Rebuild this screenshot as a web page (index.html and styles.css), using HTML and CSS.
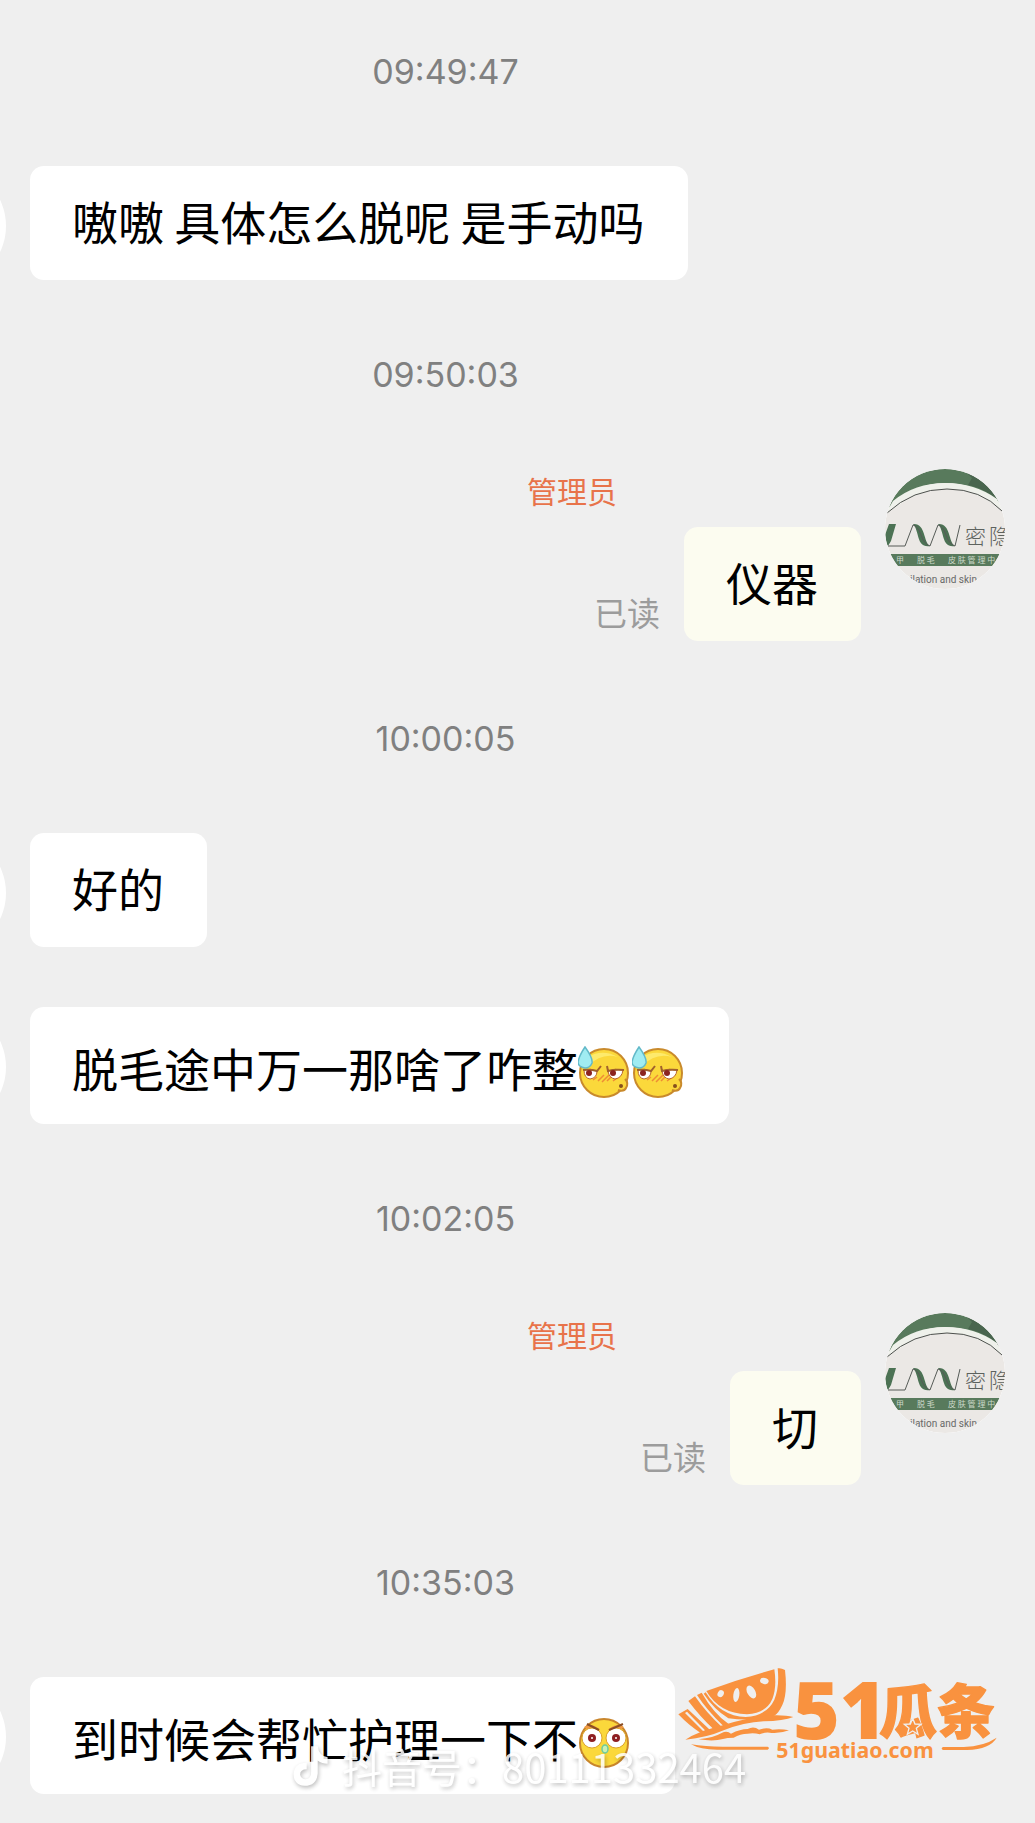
FILE: index.html
```html
<!DOCTYPE html>
<html lang="zh-CN">
<head>
    <meta charset="UTF-8">
    <meta name="viewport" content="width=device-width, initial-scale=1.0">
    <title>聊天记录</title>
    <link rel="stylesheet" href="styles.css">
</head>
<body>
    <!-- shared drawings -->
    <svg class="defs" width="0" height="0" aria-hidden="true">
        <symbol id="shop" viewBox="0 0 120 120">
            <clipPath id="round"><circle cx="60" cy="60" r="60"/></clipPath>
            <g clip-path="url(#round)">
                <rect width="120" height="120" fill="#ebe8e5"/>
                <path d="M0 0H120V38Q92 14 60 14T0 42Z" fill="#587a5c"/>
                <path d="M78 0H120V38Q103 20 83 16L87 9Z" fill="#3f5644" opacity=".6"/>
                <path d="M8 32Q30 14 60 14T112 30L120 44Q92 20 62 20T0 46Z" fill="#eff1eb"/>
                <path d="M2 44Q28 20 62 20T117 42" fill="none" stroke="#4c4f4c"/>
                <path d="M4 55H11L6 72L3 77L0 72V66ZM28 55C41 54 38 73 45 77C31 79 35 63 28 55ZM53 55C66 54 63 73 70 77C56 79 60 63 53 55Z" fill="#4c7254"/>
                <path d="M3 77H20L28 56Q33 57 36 66T45 77L53 56Q58 57 61 66T70 77L75 56" fill="none" stroke="#565b57"/>
                <rect y="85" width="120" height="12" fill="#587a5c"/>
                <text class="shop-name" x="80" y="75">密</text>
                <text class="shop-name" x="104" y="75">隐</text>
                <text class="shop-line" x="11" y="94">甲</text>
                <text class="shop-line" x="32" y="94">脱 毛</text>
                <text class="shop-line" x="63" y="94">皮 肤 管 理 中</text>
                <text class="shop-latin" x="92" y="114">pilation and skin</text>
            </g>
        </symbol>
        <symbol id="sweat" viewBox="0 0 54 54">
            <circle cx="26" cy="27" r="24" fill="#fbd83b" stroke="#c98a2c" stroke-width="2"/>
            <path d="M8 12Q24 2 40 11Q24 6 10 20Z" fill="#fdea6c"/>
            <path d="M47 33Q51 37 48 42Q46 46 40 44" fill="#fbd83b" stroke="#c98a2c" stroke-width="2"/>
            <path d="M20 35L26 29M24 36L31 29M29 35L34 30M15 34L19 31M35 35L39 32" stroke="#ee8c35" stroke-width="1.5"/>
            <path d="M6 24Q12 22 19 25Q19 32 12 33Q6 32 6 24ZM30 25Q37 22 45 24Q44 32 37 33Q31 32 30 25Z" fill="#fff" stroke="#b8672c"/>
            <path d="M5 24Q12 23 19 25L23 20M46 24Q37 23 30 25L29 20" fill="none" stroke="#a1612c" stroke-width="2"/>
            <circle cx="11" cy="27" r="3" fill="#8b2420"/>
            <circle cx="35" cy="27" r="3" fill="#8b2420"/>
            <circle cx="43" cy="40" r="2" fill="#86501c"/>
            <path d="M7 1Q15 12 14 17Q12 22 7 22Q0 21 0 16Q1 10 7 1Z" fill="#a0ecf2" stroke="#62b9c9" stroke-width="1.5"/>
        </symbol>
        <symbol id="stare" viewBox="0 0 54 54">
            <circle cx="26" cy="27" r="24" fill="#fbd83b" stroke="#c9862c" stroke-width="2"/>
            <path d="M6 11Q14 6 22 14L14 17ZM46 11Q38 6 30 14L38 17Z" fill="#f19a44"/>
            <circle cx="14" cy="22" r="10" fill="#fff" stroke="#dba32c"/>
            <circle cx="38" cy="22" r="10" fill="#fff" stroke="#dba32c"/>
            <path d="M9 8L21 14M45 8L31 14" stroke="#8c4f24" stroke-width="2"/>
            <circle cx="14" cy="22" r="4" fill="#8e1f22"/>
            <circle cx="38" cy="22" r="4" fill="#8e1f22"/>
            <circle cx="14" cy="22" r="1" fill="#fff"/>
            <circle cx="38" cy="22" r="1" fill="#fff"/>
            <ellipse cx="27" cy="33" rx="3" ry="4" fill="#c9f0b4" stroke="#6ccb9d" stroke-width="1.5"/>
        </symbol>
    </svg>

    <main class="chat">
        <time class="time">09:49:47</time>

        <div class="message">
            <span class="avatar"></span>
            <p class="bubble">嗷嗷 具体怎么脱呢 是手动吗</p>
        </div>

        <time class="time">09:50:03</time>

        <div class="message self">
            <svg class="avatar" role="img" aria-label="密隐"><use href="#shop"/></svg>
            <div class="content">
                <span class="role">管理员</span>
                <div class="line">
                    <span class="read">已读</span>
                    <p class="bubble">仪器</p>
                </div>
            </div>
        </div>

        <time class="time">10:00:05</time>

        <div class="message">
            <span class="avatar"></span>
            <p class="bubble">好的</p>
        </div>
        <div class="message">
            <span class="avatar"></span>
            <p class="bubble with-emoji">脱毛途中万一那啥了咋整<svg class="emoji"><use href="#sweat"/></svg><svg class="emoji"><use href="#sweat"/></svg></p>
        </div>

        <time class="time">10:02:05</time>

        <div class="message self">
            <svg class="avatar" role="img" aria-label="密隐"><use href="#shop"/></svg>
            <div class="content">
                <span class="role">管理员</span>
                <div class="line">
                    <span class="read">已读</span>
                    <p class="bubble">切</p>
                </div>
            </div>
        </div>

        <time class="time">10:35:03</time>

        <div class="message">
            <span class="avatar"></span>
            <p class="bubble with-emoji">到时候会帮忙护理一下不<svg class="emoji"><use href="#stare"/></svg></p>
        </div>
    </main>

    <div class="watermark">
        <svg class="note" viewBox="0 0 36 40" aria-hidden="true">
            <path d="M19 2H25Q26 11 34 12V18Q29 18 25 15V27Q24 38 13 38Q3 37 3 27Q4 17 15 17V23Q9 23 9 28Q10 32 14 32Q19 32 19 26Z" fill="#fff"/>
        </svg>
        <span>抖音号：80111332464</span>
    </div>

    <svg class="site-logo" viewBox="50 50 960 291" role="img" aria-label="51瓜条">
        <g fill="#f9923f">
            <!-- melon slice -->
            <path d="M138 122Q240 84 342 57Q350 110 336 146Q318 188 260 192Q178 190 138 122Z"/>
            <path d="M352 54Q362 52 374 59Q382 130 366 164Q354 190 342 196Q280 214 204 204Q160 176 130 130L136 126Q180 198 256 200Q320 196 342 148Q358 110 352 54Z"/>
            <path d="M110 134L124 127Q160 190 206 222L190 228Q140 180 110 134ZM84 152L104 138Q140 190 184 229L160 237Q120 200 84 152ZM54 192L82 176L150 240L124 250Q86 226 54 192Z"/>
            <path d="M75 268Q110 244 190 224Q280 196 340 195Q376 194 399 200Q370 212 310 213Q250 216 190 240Q140 262 75 268Z"/>
            <path d="M115 267Q160 262 184 248Q200 240 212 250Q240 236 262 236Q280 226 296 238Q320 230 336 238Q360 234 386 240Q360 250 334 248Q316 244 298 252Q280 246 262 250Q240 250 220 262Q200 262 188 266Q160 274 115 267Z"/>
            <path d="M92 282Q140 290 200 289H322Q330 293 322 298H170Q120 298 92 282Z"/>
            <path d="M848 290H910Q970 288 1009 262Q990 296 920 299H848Q840 294 848 290Z"/>
        </g>
        <g fill="#efefef">
            <ellipse cx="181" cy="130" rx="9" ry="11" transform="rotate(30 181 130)"/>
            <ellipse cx="228" cy="134" rx="9" ry="21" transform="rotate(8 228 134)"/>
            <ellipse cx="273" cy="125" rx="12" ry="21" transform="rotate(-30 273 125)"/>
            <ellipse cx="312" cy="92" rx="13" ry="9" transform="rotate(14 312 92)"/>
            <path d="M74 188L80 184L134 240L128 242Z"/>
        </g>
        <text class="logo-number" x="398" y="266">51</text>
        <text class="logo-name" x="656" y="249">瓜条</text>
        <path d="M757 204L764 221L782 222L768 234L773 252L757 242L741 252L746 234L732 222L750 221Z" fill="#f9923f" stroke="#efefef" stroke-width="4"/>
        <text class="logo-domain" x="348" y="323">51guatiao.com</text>
    </svg>
</body>
</html>
```

FILE: styles.css
```css
* {
    box-sizing: border-box;
}
body {
    position: relative;
    margin: 0;
    min-height: 100vh;
    overflow-x: hidden;
    background-color: #efefef;
    color: #000;
    font-family: "Noto Sans CJK SC", sans-serif;
}
.defs {
    position: absolute;
}
/* the list runs past the left edge, only a sliver of the avatars shows */
.chat {
    display: flex;
    flex-direction: column;
    margin-left: -144px;
    padding: 48px 30px 0;
}
.time {
    margin-bottom: 70px;
    color: #808080;
    font-family: Inter, sans-serif;
    font-size: 34px;
    line-height: 48px;
    text-align: center;
}
.message {
    display: flex;
    align-items: flex-start;
    gap: 24px;
}
.message + .time {
    margin-top: 71px;
}
.message + .message {
    margin-top: 60px;
}
.self {
    flex-direction: row-reverse;
    padding-bottom: 3px;
}
.avatar {
    flex: none;
    width: 120px;
    height: 120px;
    margin-bottom: -10px;
    border-radius: 50%;
    background-color: #fff;
}
.content {
    display: flex;
    flex-direction: column;
    align-items: flex-end;
    gap: 16px;
}
.role {
    margin-right: 244px;
    color: #e8734a;
    font-size: 30px;
    line-height: 42px;
}
.line {
    display: flex;
    align-items: flex-end;
    gap: 24px;
}
.read {
    padding-bottom: 5px;
    color: #9c9c9c;
    font-size: 33px;
    line-height: 48px;
}
.bubble {
    margin: 0;
    padding: 21px 43px 27px 42px;
    border-radius: 14px;
    background-color: #fff;
    font-size: 46px;
    line-height: 66px;
}
.self .bubble {
    background-color: #fcfcf0;
}
.with-emoji {
    display: flex;
    align-items: flex-end;
    padding-top: 27px;
    padding-bottom: 24px;
}
.emoji {
    flex: none;
    width: 54px;
    height: 54px;
    overflow: visible;
}
.watermark {
    position: absolute;
    bottom: 28px;
    left: 290px;
    display: flex;
    align-items: center;
    gap: 12px;
    color: #fff;
    font-size: 40px;
    line-height: 58px;
    opacity: 0.85;
    text-shadow: 1px 2px 4px rgba(0,0,0,0.3);
}
.note {
    width: 40px;
    height: 44px;
    filter: drop-shadow(1px 2px 2px rgba(0,0,0,0.3));
}
.site-logo {
    position: absolute;
    right: 38px;
    bottom: 59px;
    width: 320px;
    height: 97px;
}
.shop-name {
    fill: #5d625e;
    font-size: 21px;
    font-weight: 300;
}
.shop-line {
    fill: #cbd8c8;
    font-size: 8px;
}
.shop-latin {
    fill: #686868;
    font-family: Roboto, sans-serif;
    font-size: 10px;
    text-anchor: end;
}
.logo-number,
.logo-name,
.logo-domain {
    fill: #f9923f;
    font-family: "Noto Sans CJK SC", sans-serif;
    font-weight: 900;
}
.logo-number {
    font-family: "Open Sans", sans-serif;
    font-size: 240px;
}
.logo-name {
    font-size: 174px;
    stroke: #f9923f;
    stroke-width: 4px;
    stroke-linejoin: round;
}
.logo-domain {
    font-family: "Noto Sans", sans-serif;
    font-size: 64px;
    font-weight: 700;
}
```
